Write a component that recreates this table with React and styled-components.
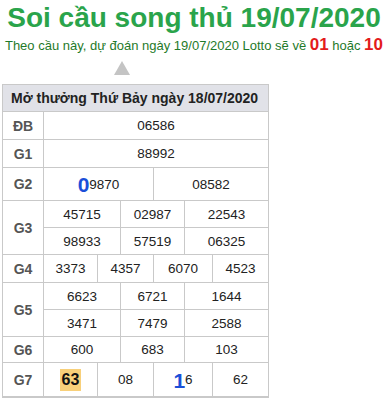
import styled, { createGlobalStyle } from "styled-components";

const GlobalStyle = createGlobalStyle`
  body {
    margin: 0;
    background: #fff;
    font-family: "Liberation Sans", Arial, sans-serif;
  }
`;

const Page = styled.div`
  width: 388px;
  padding-top: 1px;
`;

const Title = styled.h1`
  margin: 0;
  text-align: center;
  font-size: 28px;
  line-height: 34px;
  font-weight: bold;
  color: #2aa44b;
`;

const Subtitle = styled.p`
  margin: 0;
  text-align: center;
  font-size: 13px;
  line-height: 20px;
  color: #1f7a2a;
  white-space: nowrap;
`;

const Red = styled.b`
  color: #e31b1b;
  font-size: 17px;
`;

const Arrow = styled.div`
  width: 0;
  height: 0;
  margin: 5px 0 0 114px;
  border-left: 8px solid transparent;
  border-right: 8px solid transparent;
  border-bottom: 14px solid #c4c4c4;
`;

const Board = styled.div`
  margin: 9px 0 0 2px;
  width: 265px;
  display: grid;
  grid-template-columns: 40px 53px 22px 32px 30px 27px 55px;
  grid-template-rows: 26px 27px 27px 32px 26px 26px 27px 26px 26px 25px 33px;
  gap: 1px;
  background: #c9c9c9;
  border: 1px solid #c9c9c9;
  border-bottom-width: 2px;
`;

const Head = styled.div`
  grid-column: 1 / -1;
  background: #e1e2e8;
  color: #222;
  font-size: 14px;
  font-weight: bold;
  display: flex;
  align-items: center;
  padding-left: 8px;
`;

const Label = styled.div`
  grid-row: span ${(p) => p.$rows || 1};
  background: #fff;
  color: #555;
  font-size: 14px;
  font-weight: bold;
  display: flex;
  align-items: center;
  justify-content: center;
`;

const Cell = styled.div`
  grid-column: span ${(p) => p.$span};
  background: #fff;
  color: #222;
  font-size: 13.5px;
  display: flex;
  align-items: center;
  justify-content: center;
`;

const Big = styled.b`
  color: #1a4fd8;
  font-size: 21px;
  line-height: 1;
  margin-top: 1px;
`;

const Mark = styled.b`
  background: #f8d07a;
  color: #111;
  font-size: 16px;
  padding: 2px 2px;
  line-height: 18px;
`;

const rows = [
  { label: "ĐB", cells: [[6, "06586"]] },
  { label: "G1", cells: [[6, "88992"]] },
  {
    label: "G2",
    cells: [
      [3, <><Big>0</Big>9870</>],
      [3, "08582"],
    ],
  },
  { label: "G3", rows: 2, cells: [[2, "45715"], [2, "02987"], [2, "22543"]] },
  { cells: [[2, "98933"], [2, "57519"], [2, "06325"]] },
  { label: "G4", cells: [[1, "3373"], [2, "4357"], [2, "6070"], [1, "4523"]] },
  { label: "G5", rows: 2, cells: [[2, "6623"], [2, "6721"], [2, "1644"]] },
  { cells: [[2, "3471"], [2, "7479"], [2, "2588"]] },
  { label: "G6", cells: [[2, "600"], [2, "683"], [2, "103"]] },
  {
    label: "G7",
    cells: [
      [1, <Mark>63</Mark>],
      [2, "08"],
      [2, <><Big>1</Big>6</>],
      [1, "62"],
    ],
  },
];

export default function App() {
  return (
    <Page>
      <GlobalStyle />
      <Title>Soi cầu song thủ 19/07/2020</Title>
      <Subtitle>
        Theo cầu này, dự đoán ngày 19/07/2020 Lotto sẽ về <Red>01</Red> hoặc{" "}
        <Red>10</Red>
      </Subtitle>
      <Arrow />
      <Board>
        <Head>Mở thưởng Thứ Bảy ngày 18/07/2020</Head>
        {rows.map((r, i) => [
          r.label && (
            <Label key={"l" + i} $rows={r.rows}>
              {r.label}
            </Label>
          ),
          ...r.cells.map(([span, v], j) => (
            <Cell key={i + "-" + j} $span={span}>
              {v}
            </Cell>
          )),
        ])}
      </Board>
    </Page>
  );
}
